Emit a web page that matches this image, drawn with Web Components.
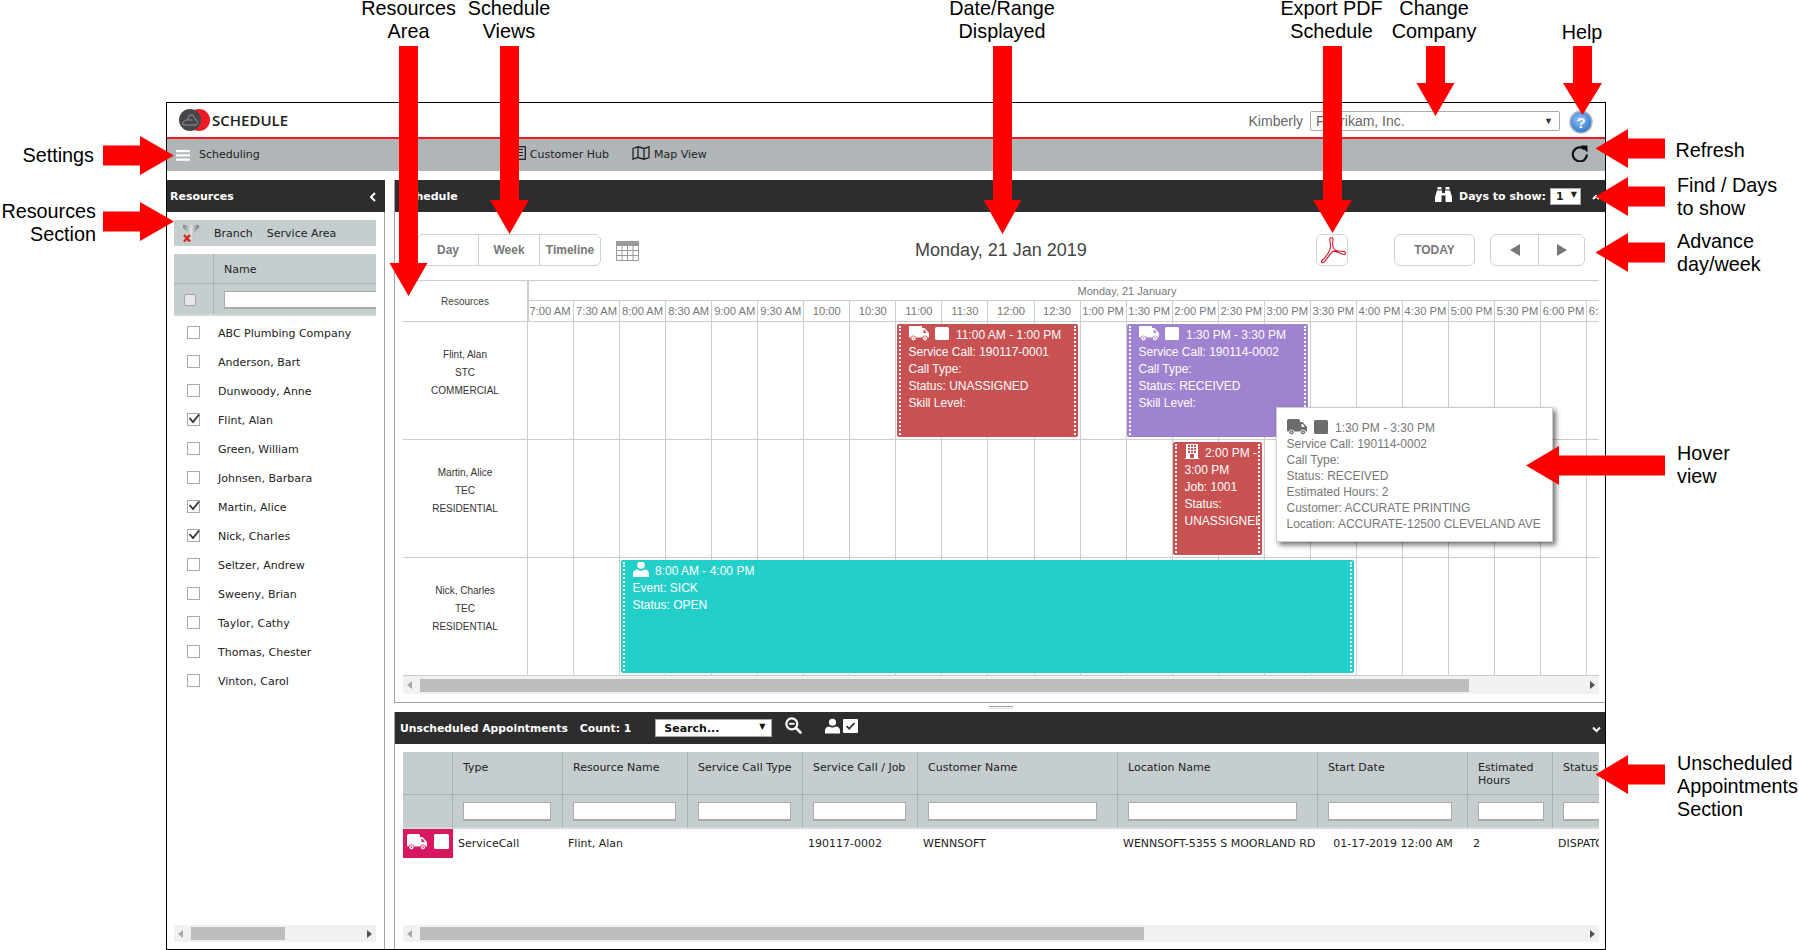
<!DOCTYPE html>
<html>
<head>
<meta charset="utf-8">
<title>Schedule</title>
<style>
  html, body { margin: 0; height: 950px; overflow: hidden; background: #fff; }
  body { font-family: "DejaVu Sans", sans-serif; font-size: 11px; color: #222; }
  sched-app { margin: 102px 0 0 166px; }
</style>
</head>
<body>
<sched-app>
  <app-header slot="top"></app-header>
  <nav-bar slot="top"></nav-bar>
  <resource-panel slot="left"></resource-panel>
  <schedule-panel slot="right">
    <sched-board>
      <sched-row who="Flint, Alan|STC|COMMERCIAL">
        <sched-event at="370" span="181" color="#c85151" icon="truck" time="11:00 AM - 1:00 PM">
          <div>Service Call: 190117-0001</div><div>Call Type:</div><div>Status: UNASSIGNED</div><div>Skill Level:</div>
        </sched-event>
        <sched-event at="600" span="181" color="#9f83d0" icon="truck" time="1:30 PM - 3:30 PM">
          <div>Service Call: 190114-0002</div><div>Call Type:</div><div>Status: RECEIVED</div><div>Skill Level:</div>
        </sched-event>
      </sched-row>
      <sched-row who="Martin, Alice|TEC|RESIDENTIAL">
        <sched-event at="646" span="89" color="#c85151" icon="building" time="2:00 PM -<br>3:00 PM">
          <div>Job: 1001</div><div>Status:</div><div>UNASSIGNED</div>
        </sched-event>
      </sched-row>
      <sched-row who="Nick, Charles|TEC|RESIDENTIAL">
        <sched-event at="94" span="733" color="#23cfc9" icon="person" time="8:00 AM - 4:00 PM">
          <div>Event: SICK</div><div>Status: OPEN</div>
        </sched-event>
      </sched-row>
      <hover-card></hover-card>
    </sched-board>
  </schedule-panel>
  <unscheduled-panel slot="right"></unscheduled-panel>
</sched-app>
<call-outs></call-outs>

<script>
const ICONS = {
  truck: (c, hole) => `<svg width="20" height="16" viewBox="0 0 20 16"><path fill="${c}" d="M1.5 0h10a1.5 1.5 0 0 1 1.5 1.500V3h2.500L20 8v4.500h-1.200a3 3 0 0 0-5.600 0H7.300a3 3 0 0 0-5.600 0H1a1 1 0 0 1-1-1V1.500A1.500 1.500 0 0 1 1.500 0z"/><path fill="${hole}" d="M14.500 5h1.200l2 3h-3.200z"/><circle cx="4.500" cy="13.300" r="2.100" fill="${c}"/><circle cx="16" cy="13.300" r="2.100" fill="${c}"/><circle cx="4.500" cy="13.300" r=".8" fill="${hole}"/><circle cx="16" cy="13.300" r=".8" fill="${hole}"/></svg>`,
  building: (c, hole) => `<svg width="14" height="16" viewBox="0 0 14 16"><path fill="${c}" d="M1 0h12v15h1v1H0v-1h1z"/><g fill="${hole}"><rect x="3" y="2" width="2" height="2"/><rect x="6" y="2" width="2" height="2"/><rect x="9" y="2" width="2" height="2"/><rect x="3" y="5" width="2" height="2"/><rect x="6" y="5" width="2" height="2"/><rect x="9" y="5" width="2" height="2"/><rect x="3" y="8" width="2" height="2"/><rect x="6" y="8" width="2" height="2"/><rect x="9" y="8" width="2" height="2"/><rect x="5" y="11" width="4" height="4"/></g></svg>`,
  person: (c) => `<svg width="16" height="16" viewBox="0 0 16 16"><circle cx="8" cy="4" r="3.800" fill="${c}"/><path fill="${c}" d="M0 16v-3.500C0 10 2.500 8.500 4.500 8.500c1 .8 2.200 1.200 3.500 1.200s2.500-.4 3.500-1.200c2 0 4.500 1.500 4.500 4V16z"/></svg>`
};
const TEXT_SANS = '"Liberation Sans", Arial, sans-serif';

class SchedApp extends HTMLElement {
  connectedCallback() {
    this.attachShadow({ mode: 'open' });
    this.shadowRoot.innerHTML = `
      <style>
        :host { display: flex; flex-direction: column; box-sizing: border-box; width: 1440px; height: 848px; border: 1px solid #000; background: #fff; }
        .main { flex: 1; min-height: 0; display: flex; margin-top: 9px; gap: 9px; }
        .left { display: flex; width: 218px; flex: none; min-width: 0; }
        .right { flex: 1; min-width: 0; display: flex; flex-direction: column; gap: 9px; }
      </style>
      <slot name="top"></slot>
      <div class="main">
        <div class="left"><slot name="left"></slot></div>
        <div class="right"><slot name="right"></slot></div>
      </div>`;
  }
}

class AppHeader extends HTMLElement {
  connectedCallback() {
    this.attachShadow({ mode: 'open' });
    this.shadowRoot.innerHTML = `
      <style>
        :host { display: flex; align-items: center; box-sizing: border-box; height: 36px; padding: 0 12px; border-bottom: 2px solid #ed1c24; font-family: ${TEXT_SANS}; }
        .brand { font: 600 15px "Open Sans", sans-serif; color: #222; margin-left: 2px; }
        .who { margin-left: auto; font-size: 14px; color: #666; margin-top: 1px; }
        .company { box-sizing: border-box; display: flex; align-items: center; justify-content: space-between; width: 250px; height: 20px; margin: 1px 9px 0 7px; padding: 0 6px 0 5px; border: 1px solid #aaa; border-radius: 2px; font-size: 14px; color: #666; }
        .company i { font-style: normal; font-size: 9px; color: #333; }
        svg { display: block; }
      </style>
      <svg width="31" height="22" viewBox="0 0 31 22">
        <circle cx="20" cy="11" r="11" fill="#ed1c24"/>
        <circle cx="11" cy="11" r="11" fill="#45474b"/>
        <path fill="none" stroke="#97999c" stroke-width=".9" d="M4 16h13c2.500-.5 2.500-4.500-.5-5L14 6h-3.500L8.500 11C5 11 3 13.500 4 16zM8.500 11h5"/>
      </svg>
      <span class="brand">SCHEDULE</span>
      <span class="who">Kimberly</span>
      <div class="company"><span>Fabrikam, Inc.</span><i>▼</i></div>
      <svg width="24" height="24" viewBox="0 0 24 24" style="margin:4px 0 0 0">
        <defs><radialGradient id="b" cx=".45" cy=".4" r=".7"><stop offset="0" stop-color="#9cc6f2"/><stop offset=".7" stop-color="#3f86d8"/><stop offset="1" stop-color="#2a62b5"/></radialGradient></defs>
        <circle cx="12" cy="12" r="11" fill="url(#b)" stroke="#b4b8bc" stroke-width="1.500"/>
        <text x="12" y="17.500" text-anchor="middle" font-family="Liberation Sans" font-weight="bold" font-size="15" fill="#fff">?</text>
      </svg>`;
  }
}

class NavBar extends HTMLElement {
  connectedCallback() {
    this.attachShadow({ mode: 'open' });
    this.shadowRoot.innerHTML = `
      <style>
        :host { display: flex; align-items: center; box-sizing: border-box; height: 32px; background: #b0b5b7; color: #222; padding: 0 0 2px 9px; }
        svg { display: block; flex: none; }
        .item { display: flex; align-items: center; gap: 4px; }
        .spacer { flex: 1; }
      </style>
      <svg width="14" height="11" viewBox="0 0 14 11" style="margin-top:2px"><path fill="#fff" d="M0 0h14v2.200H0zM0 4.300h14v2.200H0zM0 8.600h14v2.200H0z"/></svg>
      <span style="margin-left:9px">Scheduling</span>
      <div class="item" style="margin-left:253px">
        <svg width="13" height="14" viewBox="0 0 13 14" style="margin-top:-2px"><rect x=".7" y=".7" width="11.600" height="12.600" fill="none" stroke="#222" stroke-width="1.300"/><path stroke="#222" stroke-width="1.200" d="M5 3.500h5M5 6.500h5M5 9.500h5"/></svg>
        <span>Customer Hub</span>
      </div>
      <div class="item" style="margin-left:23px">
        <svg width="18" height="14" viewBox="0 0 18 14" style="margin-top:-2px"><path fill="none" stroke="#222" stroke-width="1.300" d="M1 2.500L6 .8l6 1.700L17 .8v10.700l-5 1.700-6-1.700-5 1.700zM6 .8v10.700M12 2.500v10.700"/></svg>
        <span>Map View</span>
      </div>
      <div class="spacer"></div>
      <svg width="18" height="17" viewBox="0 0 18 17" style="margin:-2px 16px 0 0"><path fill="none" stroke="#111" stroke-width="2.200" d="M13.800 4.500A7 7 0 1 0 15.800 9.500"/><path fill="#111" d="M9.500 .5l7 0 0 7z"/></svg>`;
  }
}

class DarkBar extends HTMLElement {
  connectedCallback() {
    this.attachShadow({ mode: 'open' });
    this.shadowRoot.innerHTML = `
      <style>
        :host { display: flex; align-items: center; flex: none; height: 32px; background: #2d2d2d; color: #fff; font-weight: bold; white-space: nowrap; }
        .end { margin-left: auto; display: flex; align-items: center; }
      </style>
      <slot></slot>
      <div class="end"><slot name="end"></slot></div>`;
  }
}

class FakeScroll extends HTMLElement {
  connectedCallback() {
    const start = this.getAttribute('start'), size = this.getAttribute('size');
    this.attachShadow({ mode: 'open' });
    this.shadowRoot.innerHTML = `
      <style>
        :host { display: flex; flex: none; align-items: center; height: 17px; background: #f1f1f1; position: relative; }
        .thumb { height: 13px; background: #bdbdbd; margin-left: ${start - 17}px; width: ${size}px; }
        .btn { width: 17px; height: 13px; display: flex; align-items: center; justify-content: center; flex: none; }
        .spacer { flex: 1; }
        .l { width: 0; height: 0; border: 4px solid transparent; border-left: 0; border-right: 5px solid #a9a9a9; margin-right: 4px; }
        .r { width: 0; height: 0; border: 4px solid transparent; border-right: 0; border-left: 5px solid #505050; margin-left: 4px; }
      </style>
      <div class="btn"><i class="l"></i></div>
      <div class="thumb"></div>
      <div class="spacer"></div>
      <div class="btn"><i class="r"></i></div>`;
  }
}

class ResRow extends HTMLElement {
  connectedCallback() {
    const on = this.hasAttribute('checked');
    this.attachShadow({ mode: 'open' });
    this.shadowRoot.innerHTML = `
      <style>
        :host { display: flex; align-items: center; height: 29px; padding-left: 13px; color: #222; }
        .box { box-sizing: border-box; width: 13px; height: 13px; border: 1px solid #aaa; margin: -2px 18px 0 0; position: relative; flex: none; }
        svg { position: absolute; left: 0; top: -1px; }
      </style>
      <div class="box">${on ? '<svg width="13" height="12" viewBox="0 0 13 12"><path fill="none" stroke="#333" stroke-width="1.800" d="M1.500 5l3.500 4L11 1.500"/></svg>' : ''}</div>
      <span><slot></slot></span>`;
  }
}

class ResourcePanel extends HTMLElement {
  connectedCallback() {
    const people = [['ABC Plumbing Company'], ['Anderson, Bart'], ['Dunwoody, Anne'], ['Flint, Alan', 1], ['Green, William'], ['Johnsen, Barbara'], ['Martin, Alice', 1], ['Nick, Charles', 1], ['Seltzer, Andrew'], ['Sweeny, Brian'], ['Taylor, Cathy'], ['Thomas, Chester'], ['Vinton, Carol']];
    this.attachShadow({ mode: 'open' });
    this.shadowRoot.innerHTML = `
      <style>
        :host { display: flex; flex-direction: column; flex: 1; min-width: 0; box-sizing: border-box; border-right: 1px solid #a3a3a3; }
        dark-bar { margin-right: -1px; }
        .body { flex: 1; min-height: 0; min-width: 0; display: flex; flex-direction: column; padding: 8px 8px 7px 7px; }
        .filter { display: flex; align-items: center; height: 26px; background: #c5cdcf; padding-left: 9px; }
        .filter span { margin-left: 15px; }
        .filter span + span { margin-left: 14px; }
        .grid { margin-top: 8px; background: #c5cdcf; display: grid; grid-template-columns: 40px minmax(0, 1fr); grid-template-rows: 30px 30px 2px; overflow: hidden; }
        .grid > div { display: flex; align-items: center; box-sizing: border-box; }
        .c0 { border-right: 1px solid #aab1b3; justify-content: center; }
        .top { border-bottom: 1px solid #aab1b3; }
        .name { padding: 2px 0 0 10px; }
        input { box-sizing: border-box; width: 200px; height: 18px; border: 1px solid #aaa; border-width: 1px 0 2px 1px; margin: 1px 0 0 10px; flex: none; background: #fff; padding: 0; }
        .all { box-sizing: border-box; width: 12px; height: 12px; border: 1px solid #a5a5a5; border-radius: 2px; background: #e6e6e6; margin: 2px 7px 0 0; }
        .strip { grid-column: 1 / 3; background: #d3d9da; }
        .list { padding-top: 3px; flex: 1; }
        svg { display: block; flex: none; }
      </style>
      <dark-bar style="padding-left:3px">Resources
        <svg slot="end" width="7" height="10" viewBox="0 0 7 10" style="margin:2px 9px 0 0"><path fill="none" stroke="#fff" stroke-width="2" d="M6 1L2 5l4 4"/></svg>
      </dark-bar>
      <div class="body">
        <div class="filter">
          <svg width="16" height="17" viewBox="0 0 16 17">
            <defs><linearGradient id="m" x1="0" y1="0" x2="1" y2="0"><stop offset="0" stop-color="#7d7f80"/><stop offset=".5" stop-color="#e4e4e4"/><stop offset="1" stop-color="#77797a"/></linearGradient></defs>
            <path fill="url(#m)" d="M0 0h16v2.500L10.500 9v5.500h-4V9L0 2.500z"/>
            <path stroke="#d8261c" stroke-width="2.400" d="M1 10l6 6.500M7 10l-6 6.500"/>
          </svg>
          <span>Branch</span><span>Service Area</span>
        </div>
        <div class="grid">
          <div class="c0 top"></div><div class="top name">Name</div>
          <div class="c0"><div class="all"></div></div><div><input type="text"></div>
          <div class="strip"></div>
        </div>
        <div class="list">
          ${people.map(p => `<res-row ${p[1] ? 'checked' : ''}>${p[0]}</res-row>`).join('')}
        </div>
        <fake-scroll start="17" size="94"></fake-scroll>
      </div>`;
  }
}

class SchedulePanel extends HTMLElement {
  connectedCallback() {
    this.attachShadow({ mode: 'open' });
    this.shadowRoot.innerHTML = `
      <style>
        :host { display: flex; flex-direction: column; flex: none; box-sizing: border-box; height: 523px; border-left: 1px solid #a3a3a3; border-bottom: 1px solid #a3a3a3; position: relative; }
        .days { display: flex; align-items: center; }
        .pick { box-sizing: border-box; display: flex; justify-content: space-between; align-items: center; width: 31px; height: 17px; background: #fff; border: 1px solid #aaa; color: #222; padding: 0 3px 0 5px; margin: 0 11px 0 4px; }
        .pick i { font-style: normal; font-size: 8px; margin-top: -3px; }
        .tools { display: grid; grid-template-columns: 1fr auto 1fr; align-items: start; box-sizing: border-box; height: 68px; padding: 22px 6px 0 8px; font-family: ${TEXT_SANS}; }
        .tools > div { display: flex; align-items: center; }
        .date { font-size: 18px; line-height: 32px; color: #444; }
        .group { display: flex; box-sizing: border-box; height: 32px; border: 1px solid #d0d0d0; border-radius: 6px; font-weight: bold; font-size: 12px; color: #777; }
        .group > span { display: flex; align-items: center; justify-content: center; box-sizing: border-box; }
        .group > span + span { border-left: 1px solid #d0d0d0; }
        .right { justify-content: flex-end; }
        .body { flex: 1; display: flex; flex-direction: column; padding: 0 6px 0 8px; min-height: 0; }
        .tri-l { width: 0; height: 0; border: 6px solid transparent; border-left: 0; border-right: 10px solid #777; }
        .tri-r { width: 0; height: 0; border: 6px solid transparent; border-right: 0; border-left: 10px solid #777; }
        svg { display: block; flex: none; }
      </style>
      <dark-bar style="padding-left:6px">Schedule
        <span slot="end" class="days">
          <svg width="17" height="15" viewBox="0 0 17 15" style="margin:-3px 7px 0 0"><path fill="#fff" d="M2.500 0h4v2.500h-4zM10.500 0h4v2.500h-4zM2 3.500h5V6h3V3.500h5L17 10v5h-6.500V8.500h-4V15H0v-5z"/></svg>
          Days to show:
          <span class="pick">1<i>▼</i></span>
        </span>
        <svg slot="end" width="8" height="6" viewBox="0 0 8 6" style="margin:2px 5px 0 0"><path fill="none" stroke="#fff" stroke-width="2" d="M1 5l3-3 3 3"/></svg>
      </dark-bar>
      <div class="tools">
        <div style="padding-left:14px">
          <div class="group">
            <span style="width:60px">Day</span><span style="width:61px">Week</span><span style="width:61px">Timeline</span>
          </div>
          <svg width="23" height="21" viewBox="0 0 23 21" style="margin-left:15px">
            <path fill="#9a9a9a" d="M0 1h23v5H0z"/>
            <path fill="none" stroke="#9a9a9a" d="M.5 5.500h22v15H.5zM.5 10.500h22M.5 15.500h22M6 5.500v15M11.500 5.500v15M17 5.500v15"/>
          </svg>
        </div>
        <span class="date">Monday, 21 Jan 2019</span>
        <div class="right">
          <div class="group" style="width:32px;justify-content:center;align-items:center">
            <svg width="28" height="28" viewBox="0 0 28 28"><path fill="none" stroke="#d9152a" stroke-width="1.100" d="M13 1.500c-1.500 0-1.500 3-.5 7C13.500 13 9 20 4.500 24c-2 2-.5 3.500 1.500 2C9 23.500 12 17 15 15.500c3-1 7 2.500 11 3 2 0 2-2.500 0-3-4-.5-7-.2-9.500-1.500C14 11 14.500 7 15 4c.2-2-.8-2.500-2-2.500z"/></svg>
          </div>
          <div class="group" style="width:81px;margin-left:46px;justify-content:center;align-items:center">TODAY</div>
          <div class="group" style="margin:0 14px 0 15px">
            <span style="width:47px"><i class="tri-l"></i></span><span style="width:46px"><i class="tri-r"></i></span>
          </div>
        </div>
      </div>
      <div class="body">
        <slot></slot>
        <fake-scroll start="17" size="1049" style="height:18px"></fake-scroll>
      </div>`;
  }
}

class SchedBoard extends HTMLElement {
  connectedCallback() {
    const hours = ['7:00 AM', '7:30 AM', '8:00 AM', '8:30 AM', '9:00 AM', '9:30 AM', '10:00', '10:30', '11:00', '11:30', '12:00', '12:30', '1:00 PM', '1:30 PM', '2:00 PM', '2:30 PM', '3:00 PM', '3:30 PM', '4:00 PM', '4:30 PM', '5:00 PM', '5:30 PM', '6:00 PM', '6:30 PM'];
    this.attachShadow({ mode: 'open' });
    this.shadowRoot.innerHTML = `
      <style>
        :host { display: block; position: relative; font-family: ${TEXT_SANS}; }
        .head { display: flex; box-sizing: border-box; height: 42px; border-top: 1px solid #ccc; border-bottom: 1px solid #ccc; }
        .res { width: 124px; flex: none; display: flex; align-items: center; justify-content: center; font-size: 10px; color: #444; padding-top: 1px; box-sizing: border-box; }
        .scale { flex: 1; min-width: 0; overflow: hidden; border-left: 2px solid #ccc; }
        .day { width: 1200px; height: 19px; line-height: 20px; text-align: center; font-size: 11px; color: #777; border-bottom: 1px solid #ccc; margin-left: -2px; }
        .slots { display: flex; margin-left: -2px; height: 20px; }
        .slots span { flex: none; width: 46.050px; box-sizing: border-box; border-left: 1px solid #ccc; text-align: center; line-height: 20px; font-size: 11.200px; color: #777; white-space: nowrap; }
        .slots span:first-child { border-left: 0; }
      </style>
      <div class="head">
        <div class="res">Resources</div>
        <div class="scale">
          <div class="day">Monday, 21 January</div>
          <div class="slots">${hours.map(h => `<span>${h}</span>`).join('')}</div>
        </div>
      </div>
      <slot></slot>`;
  }
}

class SchedRow extends HTMLElement {
  connectedCallback() {
    const who = this.getAttribute('who').split('|');
    this.attachShadow({ mode: 'open' });
    this.shadowRoot.innerHTML = `
      <style>
        :host { display: flex; box-sizing: border-box; height: 118px; border-bottom: 1px solid #ccc; }
        .who { width: 124px; flex: none; box-sizing: border-box; padding-top: 24px; text-align: center; font-size: 10px; line-height: 18px; color: #333; }
        .lane { flex: 1; position: relative; background: repeating-linear-gradient(90deg, #ccc 0 1px, transparent 1px 46.050px); }
      </style>
      <div class="who">${who.map(w => `<div>${w}</div>`).join('')}</div>
      <div class="lane"><slot></slot></div>`;
  }
}

class SchedEvent extends HTMLElement {
  connectedCallback() {
    const color = this.getAttribute('color');
    const kind = this.getAttribute('icon');
    this.attachShadow({ mode: 'open' });
    this.shadowRoot.innerHTML = `
      <style>
        :host { position: absolute; top: 2px; height: 113px; left: ${this.getAttribute('at')}px; width: ${this.getAttribute('span')}px; box-sizing: border-box; background: ${color}; border-radius: 2px; color: #fff; font-size: 12px; line-height: 17px; padding: 2px; }
        .in { box-sizing: border-box; height: 109px; border-left: 2px dotted #fff; border-right: 2px dotted #fff; padding: 1px 0 0 7.500px; overflow: hidden; white-space: nowrap; }
        svg { vertical-align: top; margin: -2px 6.500px 0 0; }
        .sq { display: inline-block; width: 14px; height: 13px; background: #fff; border-radius: 1.500px; vertical-align: top; margin-right: 7px; }
      </style>
      <div class="in">
        ${ICONS[kind]('#fff', color)}${kind === 'truck' ? '<span class="sq"></span>' : ''}${this.getAttribute('time')}
        <slot></slot>
      </div>`;
  }
}

class HoverCard extends HTMLElement {
  connectedCallback() {
    this.attachShadow({ mode: 'open' });
    this.shadowRoot.innerHTML = `
      <style>
        :host { position: absolute; left: 873px; top: 127px; width: 277px; height: 135px; box-sizing: border-box; background: #fff; border: 1px solid #ccc; box-shadow: 3px 3px 5px rgba(0,0,0,.55); padding: 12px 0 0 9.500px; font-size: 12px; line-height: 16px; color: #777; white-space: nowrap; }
        svg { vertical-align: top; margin: -1px 7.500px 0 0; }
        .sq { display: inline-block; width: 14px; height: 14px; background: #6c6c6c; border-radius: 1.500px; vertical-align: top; margin: 0 7px 0 0; }
      </style>
      <div>${ICONS.truck('#6c6c6c', '#fff')}<span class="sq"></span>1:30 PM - 3:30 PM</div>
      <div>Service Call: 190114-0002</div>
      <div>Call Type:</div>
      <div>Status: RECEIVED</div>
      <div>Estimated Hours: 2</div>
      <div>Customer: ACCURATE PRINTING</div>
      <div>Location: ACCURATE-12500 CLEVELAND AVE</div>`;
  }
}

class UnscheduledPanel extends HTMLElement {
  connectedCallback() {
    const heads = ['', 'Type', 'Resource Name', 'Service Call Type', 'Service Call / Job', 'Customer Name', 'Location Name', 'Start Date', 'Estimated<br>Hours', 'Status'];
    const pads = [0, 11, 11, 11, 11, 20, 20, 15, 8, 0];
    this.attachShadow({ mode: 'open' });
    this.shadowRoot.innerHTML = `
      <style>
        :host { display: flex; flex-direction: column; flex: 1; min-height: 0; border-left: 1px solid #a3a3a3; position: relative; }
        .handle { position: absolute; left: 595px; top: -6px; width: 23px; height: 3px; border-top: 1px solid #999; border-bottom: 1px solid #ddd; box-sizing: border-box; }
        .title { margin-left: 5px; font-size: 10.800px; }
        .count { margin-left: 12px; font-size: 10.800px; }
        .search { box-sizing: border-box; display: flex; align-items: center; justify-content: space-between; width: 117px; height: 18px; margin: 0 14px 0 24px; padding: 0 6px 0 8px; background: #fff; border: 1px solid #aaa; color: #111; }
        .search i { font-style: normal; font-size: 8px; margin-top: -3px; }
        .body { flex: 1; min-height: 0; display: flex; flex-direction: column; padding: 8px 6px 7px 8px; }
        .clip { flex: 1; min-height: 0; overflow: hidden; }
        .table { display: grid; grid-template-columns: 50px 110px 125px 115px 115px 200px 200px 150px 85px 100px; width: 1250px; }
        .h { box-sizing: border-box; height: 43px; background: #c5cdcf; border: solid #aab1b3; border-width: 0 1px 1px 0; padding: 9px 4px 0 10px; line-height: 13px; }
        .f { box-sizing: border-box; height: 34px; background: #c5cdcf; border-right: 1px solid #aab1b3; border-bottom: 2px solid #d3d9da; padding: 7px 11px 0 10px; }
        .f input { box-sizing: border-box; display: block; width: 100%; height: 19px; border: 1px solid #aaa; border-bottom-width: 2px; background: #fff; padding: 0; }
        .d { height: 29px; line-height: 30px; padding-left: 5px; white-space: nowrap; overflow: hidden; color: #222; }
        .tag { background: #d7175f; display: flex; gap: 7px; align-items: flex-start; padding: 5px 0 0 4px; box-sizing: border-box; }
        .tag i { display: block; width: 15px; height: 15px; background: #fff; border-radius: 1.500px; }
        svg { display: block; flex: none; }
      </style>
      <div class="handle"></div>
      <dark-bar>
        <span class="title">Unscheduled Appointments</span><span class="count">Count: 1</span>
        <div class="search"><span>Search...</span><i>▼</i></div>
        <svg width="17" height="17" viewBox="0 0 17 17" style="margin:-6px 0 0 -1px"><circle cx="6.800" cy="6.800" r="5.500" fill="none" stroke="#fff" stroke-width="2.200"/><path stroke="#fff" stroke-width="1.800" d="M4 6.800h5.600"/><path stroke="#fff" stroke-width="2.600" stroke-linecap="round" d="M11 11l4.500 4.500"/></svg>
        <svg width="15" height="16" viewBox="0 0 16 16" style="margin:-5px 3px 0 23px">${ICONS.person('#fff').replace(/<\/?svg[^>]*>/g, '')}</svg>
        <svg width="15" height="14" viewBox="0 0 15 14" style="margin-top:-5px"><rect width="15" height="14" rx="1" fill="#fff"/><path fill="none" stroke="#333" stroke-width="1.700" d="M3.500 7l2.700 2.700L11.500 4"/></svg>
        <svg slot="end" width="9" height="7" viewBox="0 0 9 7" style="margin:2px 4px 0 0"><path fill="none" stroke="#fff" stroke-width="2" d="M1 1.500l3.500 3.500L8 1.500"/></svg>
      </dark-bar>
      <div class="body">
        <div class="clip">
          <div class="table">
            ${heads.map(h => `<div class="h">${h}</div>`).join('')}
            ${heads.map((h, i) => `<div class="f" style="padding-right:${pads[i]}px">${i ? '<input type="text">' : ''}</div>`).join('')}
            <div class="d tag">${ICONS.truck('#fff', '#d7175f')}<i></i></div>
            <div class="d">ServiceCall</div>
            <div class="d">Flint, Alan</div>
            <div class="d"></div>
            <div class="d">190117-0002</div>
            <div class="d">WENNSOFT</div>
            <div class="d">WENNSOFT-5355 S MOORLAND RD</div>
            <div class="d" style="padding:0;text-align:center">01-17-2019 12:00 AM</div>
            <div class="d">2</div>
            <div class="d">DISPATCHED</div>
          </div>
        </div>
        <fake-scroll start="17" size="724"></fake-scroll>
      </div>`;
  }
}

class CallOuts extends HTMLElement {
  connectedCallback() {
    const down = (l, r, top, tip, hl, hr) => `M${l} 46H${r}V${top}H${hr}L${(l + r) / 2} ${tip}L${hl} ${top}H${l}Z`;
    const side = (tip, y, base, end) => `M${end} ${y - 10}V${y + 10}H${base}V${y + 19.500}L${tip} ${y}L${base} ${y - 19.500}V${y - 10}Z`;
    const arrows = [
      down(399, 418, 263, 296, 389.500, 427.500),
      down(500, 519, 200, 234, 490, 529),
      down(993, 1012, 200, 234, 983.500, 1021.500),
      down(1323, 1342, 200, 233, 1313, 1352),
      down(1426, 1445, 83, 116, 1416.500, 1454.500),
      down(1573, 1592, 83, 115, 1563, 1602),
      side(1595.500, 148.500, 1628, 1665),
      side(1595.500, 196.500, 1628, 1665),
      side(1595.500, 252.500, 1628, 1665),
      side(1526, 465.500, 1559, 1665),
      side(1595.500, 774.500, 1628, 1665),
      side(174, 155.500, 140, 103),
      side(174, 221.500, 140, 103)
    ];
    const labels = [
      ['c', 408.500, -3, 'Resources<br>Area'],
      ['c', 509, -3, 'Schedule<br>Views'],
      ['c', 1002, -3, 'Date/Range<br>Displayed'],
      ['c', 1331.500, -3, 'Export PDF<br>Schedule'],
      ['c', 1434, -3, 'Change<br>Company'],
      ['c', 1582, 21, 'Help'],
      ['r', 94, 144, 'Settings'],
      ['r', 96, 200, 'Resources<br>Section'],
      ['l', 1675.500, 139, 'Refresh'],
      ['l', 1677, 174, 'Find / Days<br>to show'],
      ['l', 1677, 230, 'Advance<br>day/week'],
      ['l', 1677, 442, 'Hover<br>view'],
      ['l', 1677, 752, 'Unscheduled<br>Appointments<br>Section']
    ];
    this.attachShadow({ mode: 'open' });
    this.shadowRoot.innerHTML = `
      <style>
        :host { position: absolute; left: 0; top: 0; width: 1799px; height: 950px; pointer-events: none; }
        svg { position: absolute; left: 0; top: 0; }
        div { position: absolute; font: 19.800px/23px ${TEXT_SANS}; color: #000; white-space: nowrap; }
        .c { text-align: center; transform: translateX(-50%); }
        .r { text-align: right; transform: translateX(-100%); }
      </style>
      <svg width="1799" height="950"><path fill="#f00" d="${arrows.join('')}"/></svg>
      ${labels.map(l => `<div class="${l[0]}" style="left:${l[1]}px;top:${l[2]}px">${l[3]}</div>`).join('')}`;
  }
}

customElements.define('dark-bar', DarkBar);
customElements.define('fake-scroll', FakeScroll);
customElements.define('res-row', ResRow);
customElements.define('app-header', AppHeader);
customElements.define('nav-bar', NavBar);
customElements.define('resource-panel', ResourcePanel);
customElements.define('sched-event', SchedEvent);
customElements.define('sched-row', SchedRow);
customElements.define('hover-card', HoverCard);
customElements.define('sched-board', SchedBoard);
customElements.define('schedule-panel', SchedulePanel);
customElements.define('unscheduled-panel', UnscheduledPanel);
customElements.define('call-outs', CallOuts);
customElements.define('sched-app', SchedApp);
</script>
</body>
</html>
